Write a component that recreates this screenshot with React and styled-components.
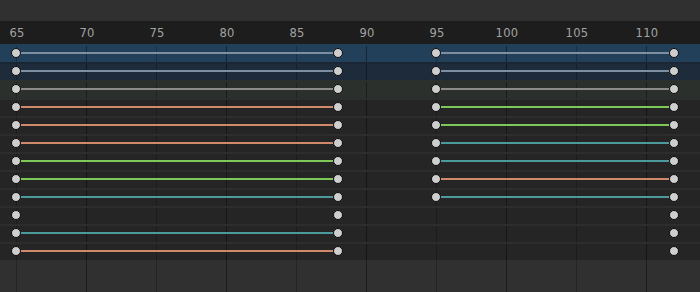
import React from "react";
import styled, { createGlobalStyle } from "styled-components";

const Global = createGlobalStyle`
  html, body { margin: 0; padding: 0; background: #303030; }
  body { font-family: "DejaVu Sans", "Liberation Sans", sans-serif; overflow: hidden; }
`;

const C = {
  blue: "#7d8fa1",
  grey: "#8c8c8c",
  salmon: "#d0896b",
  green: "#7ec85a",
  teal: "#4c9a9c",
};

const ROWS = [
  { tone: "active", segs: [C.blue, C.blue], mid: true },
  { tone: "selected", segs: [C.blue, C.blue], mid: true },
  { tone: "group", segs: [C.grey, C.grey], mid: true },
  { tone: "plain", segs: [C.salmon, C.green], mid: true },
  { tone: "plain", segs: [C.salmon, C.green], mid: true },
  { tone: "plain", segs: [C.salmon, C.teal], mid: true },
  { tone: "plain", segs: [C.green, C.teal], mid: true },
  { tone: "plain", segs: [C.green, C.salmon], mid: true },
  { tone: "plain", segs: [C.teal, C.teal], mid: true },
  { tone: "plain", segs: [null, null], mid: false },
  { tone: "plain", segs: [C.teal, null], mid: false },
  { tone: "plain", segs: [C.salmon, null], mid: false },
];

const TONES = {
  active: { bg: "#23405a", sep: "#23405a" },
  selected: { bg: "#1e2b3b", sep: "#1b2635" },
  group: { bg: "#2b302d", sep: "#2b302d" },
  plain: { bg: "#252525", sep: "#2d2d2d" },
};

/* frame grid: 14px per frame, a line every 5 frames, frame 65 at x=16 */
const grid = `
  background-image: linear-gradient(
    to right,
    rgba(0,0,0,0.25) 0 1px,
    transparent 1px 70px,
    rgba(0,0,0,0.42) 70px 71px,
    transparent 71px 140px
  );
  background-size: 140px 100%;
  background-position: 16px 0;
  background-repeat: repeat-x;
`;

const Page = styled.div`
  width: 700px;
  height: 292px;
  display: flex;
  flex-direction: column;
  background: #303030;
  overflow: hidden;
`;

const Header = styled.div`
  height: 21px;
  flex: none;
  background: #303030;
`;

const Ruler = styled.div`
  height: 23px;
  flex: none;
  box-sizing: border-box;
  padding-top: 5px;
  background: #1d1d1d;
  display: flex;
  margin-left: -18px;
  padding-left: 0;
  width: calc(100% + 18px);
`;

const Label = styled.span`
  flex: none;
  width: 70px;
  text-align: center;
  font-size: 11.5px;
  line-height: 14px;
  color: #a3a3a3;
  letter-spacing: 0.3px;
`;

const Body = styled.div`
  flex: 1;
  display: flex;
  flex-direction: column;
  background-color: #303030;
  ${grid}
`;

const Row = styled.div`
  height: 18px;
  flex: none;
  box-sizing: border-box;
  display: flex;
  align-items: center;
  padding: 0 0 2px 11px;
  border-top: 2px solid ${(p) => TONES[p.$tone].sep};
  background-color: ${(p) => TONES[p.$tone].bg};
  ${grid}
  background-position: 16px 0;
`;

const Hold = styled.div`
  flex: none;
  width: ${(p) => p.$w}px;
  height: 2px;
  margin: 0 -5px;
  background: ${(p) => p.$color || "transparent"};
`;

const Gap = styled.div`
  flex: none;
  width: ${(p) => p.$w}px;
`;

const Key = styled.div`
  flex: none;
  position: relative;
  z-index: 1;
  width: 10px;
  height: 10px;
  box-sizing: border-box;
  border-radius: 50%;
  background: ${(p) => (p.$hidden ? "transparent" : "#cecece")};
  border: 1px solid ${(p) => (p.$hidden ? "transparent" : "#0c0c0c")};
`;

const LABELS = [65, 70, 75, 80, 85, 90, 95, 100, 105, 110];

export default function App() {
  return (
    <>
      <Global />
      <Page>
        <Header />
        <Ruler>
          {LABELS.map((f) => (
            <Label key={f}>{f}</Label>
          ))}
        </Ruler>
        <Body>
          {ROWS.map((r, i) => (
            <Row key={i} $tone={r.tone}>
              <Key />
              <Hold $w={322} $color={r.segs[0]} />
              <Key />
              <Gap $w={88} />
              <Key $hidden={!r.mid} />
              <Hold $w={238} $color={r.segs[1]} />
              <Key />
            </Row>
          ))}
        </Body>
      </Page>
    </>
  );
}
